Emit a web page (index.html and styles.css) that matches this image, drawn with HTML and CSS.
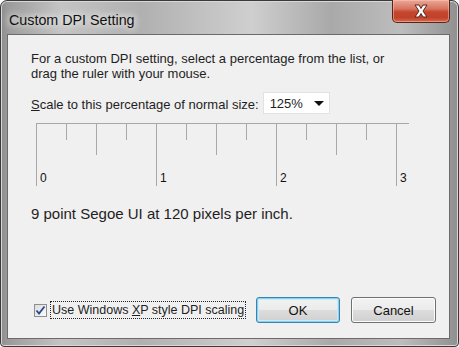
FILE: index.html
```html
<!DOCTYPE html>
<html lang="en">
<head>
    <meta charset="UTF-8">
    <title>Custom DPI Setting</title>
    <link rel="stylesheet" href="styles.css">
</head>
<body>
    <div class="window">
        <div class="titlebar">
            <span class="title">Custom DPI Setting</span>
            <button type="button" class="close-button" aria-label="Close">
                <svg width="20" height="14" viewBox="0 0 20 14">
                    <path d="M4 1 L8 1 L10 4.5 L12 1 L16 1 L12 7 L16 13 L12 13 L10 9.5 L8 13 L4 13 L8 7 Z" fill="#fff" stroke="#5a2418" stroke-width="1"/>
                </svg>
            </button>
        </div>

        <div class="client">
            <p class="intro">For a custom DPI setting, select a percentage from the list, or<br>drag the ruler with your mouse.</p>

            <div class="scale-row">
                <label for="scale"><u>S</u>cale to this percentage of normal size:</label>
                <div class="dropdown" id="scale">
                    <span>125%</span>
                    <span class="arrow"></span>
                </div>
            </div>

            <div class="ruler">
                <div class="tick major"><span>0</span></div>
                <div class="tick"></div>
                <div class="tick half"></div>
                <div class="tick"></div>
                <div class="tick major"><span>1</span></div>
                <div class="tick"></div>
                <div class="tick half"></div>
                <div class="tick"></div>
                <div class="tick major"><span>2</span></div>
                <div class="tick"></div>
                <div class="tick half"></div>
                <div class="tick"></div>
                <div class="tick major last"><span>3</span></div>
            </div>

            <p class="sample">9 point Segoe UI at 120 pixels per inch.</p>

            <div class="footer">
                <label class="xp-option">
                    <span class="checkbox">
                        <svg width="11" height="11" viewBox="0 0 11 11">
                            <path d="M1.5 5.5 L4 8.5 L9.5 1.5" fill="none" stroke="#2a4a8c" stroke-width="1.8"/>
                        </svg>
                    </span>
                    <span class="option-text">Use Windows <u>X</u>P style DPI scaling</span>
                </label>
                <button type="button" class="btn btn-default">OK</button>
                <button type="button" class="btn">Cancel</button>
            </div>
        </div>
    </div>
</body>
</html>
```

FILE: styles.css
```css
body {
    margin: 0;
    font-family: "Liberation Sans", Arial, sans-serif;
    background-color: #fff;
}

.window {
    width: 459px;
    height: 347px;
    box-sizing: border-box;
    border: 1px solid #3a3a3a;
    border-radius: 7px 7px 4px 4px;
    background: linear-gradient(90deg, #8c8c8c 0px, #9a9a9a 6px, #c4c4c4 60px, #b0b0b0 140px, #cfcfcf 250px, #a9a9a9 330px, #bdbdbd 400px, #909090 100%);
    box-shadow: inset 0 0 0 1px #d8d8d8;
    padding: 0 8px 7px 6px;
    display: flex;
    flex-direction: column;
}

.titlebar {
    height: 33px;
    display: flex;
    justify-content: space-between;
    align-items: flex-start;
}

.title {
    margin: 11px 0 0 2px;
    font-size: 14.3px;
    color: #111;
    text-shadow: 0 0 6px #eee, 0 0 10px #fff;
}

.close-button {
    width: 58px;
    height: 23px;
    margin: -1px 0 0 0;
    padding: 0;
    border: 1px solid #5a2418;
    border-top: none;
    border-radius: 0 0 5px 5px;
    background: linear-gradient(#e9a99a 0%, #d8735e 40%, #c3462d 55%, #c0422a 80%, #d86a4e 100%);
    box-shadow: inset 0 0 0 1px rgba(255, 200, 180, 0.5);
    display: flex;
    justify-content: center;
    align-items: center;
}

.client {
    flex: 1;
    background-color: #f0f0f0;
    border: 1px solid #6b6b6b;
    padding: 16px 13px 15px 23px;
    display: flex;
    flex-direction: column;
    font-size: 13px;
    color: #1e1e1e;
}

.intro {
    margin: 0;
    line-height: 15px;
}

.scale-row {
    margin-top: 11px;
    display: flex;
    align-items: center;
}

.scale-row label {
    margin-top: 3px;
}

.dropdown {
    margin-left: 4px;
    width: 67px;
    height: 22px;
    box-sizing: border-box;
    background-color: #fff;
    border: 1px solid #e2e2e2;
    padding: 0 0 0 6px;
    display: flex;
    align-items: center;
    justify-content: space-between;
}

.arrow {
    width: 0;
    height: 0;
    margin-right: 5px;
    border-left: 5px solid transparent;
    border-right: 5px solid transparent;
    border-top: 5px solid #111;
}

.ruler {
    margin: 9px 0 0 5px;
    width: 373px;
    border-top: 1px solid #a8a8a8;
    display: flex;
    align-items: flex-start;
}

.tick {
    width: 30px;
    height: 16px;
    flex: none;
    border-left: 1px solid #a8a8a8;
    box-sizing: border-box;
}

.tick.half {
    height: 31px;
}

.tick.major {
    height: 62px;
    display: flex;
    align-items: flex-end;
    padding-left: 3px;
    line-height: 15px;
    font-size: 12px;
    color: #111;
}

.tick.last {
    width: 13px;
}

.sample {
    margin: 18px 0 0 0;
    font-size: 15px;
    line-height: 20px;
}

.footer {
    margin-top: auto;
    display: flex;
    align-items: center;
}

.xp-option {
    margin-left: 3px;
    display: flex;
    align-items: center;
    flex: 1;
}

.checkbox {
    width: 13px;
    height: 13px;
    box-sizing: border-box;
    border: 1px solid #8e8f8f;
    background: linear-gradient(135deg, #dcdcdc, #fbfbfb);
    display: flex;
    justify-content: center;
    align-items: center;
}

.option-text {
    margin-left: 4px;
    padding: 1px 1px;
    outline: 1px dotted #222;
    line-height: 14px;
    font-size: 12.5px;
}

.btn {
    width: 85px;
    height: 26px;
    font-family: inherit;
    font-size: 13px;
    color: #111;
    border: 1px solid #707070;
    border-radius: 3px;
    background: linear-gradient(#f2f2f2 0%, #ebebeb 50%, #dddddd 51%, #cfcfcf 100%);
    box-shadow: inset 0 0 0 1px #fcfcfc;
    margin-left: 11px;
}

.btn-default {
    width: 84px;
    margin-left: 0;
    border-color: #3c7fb1;
    box-shadow: inset 0 0 0 1px #8ad3ef, inset 0 0 0 2px #c9ebf7;
}
```
